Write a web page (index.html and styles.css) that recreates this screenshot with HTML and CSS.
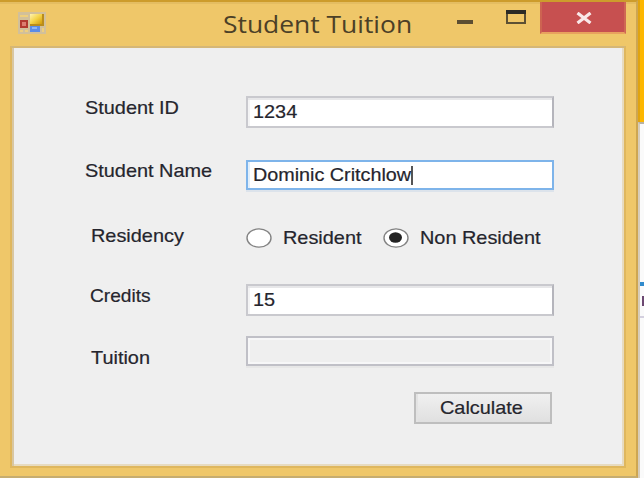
FILE: index.html
```html
<!DOCTYPE html>
<html lang="en">
<head>
<meta charset="utf-8">
<title>Student Tuition</title>
<link rel="stylesheet" href="styles.css">
</head>
<body>
<div class="desktop">
  <main class="window">
    <header class="titlebar">
      <svg class="app-icon" width="28" height="22" viewBox="0 0 28 22">
        <defs>
          <linearGradient id="gold" x1="0" y1="0" x2="1" y2="1"><stop offset="0" stop-color="#fff3b0"/><stop offset=".5" stop-color="#f4d348"/><stop offset="1" stop-color="#d19a08"/></linearGradient>
        </defs>
        <rect width="28" height="22" fill="#d2c09a"/>
        <path d="M2 3h8v2H2zM2 18h3v2H2zM7 18h3v2H7zM24 16h2v4h-2z" fill="#efcf7c"/>
        <rect x="2" y="8" width="8" height="8" fill="#b23a30"/>
        <rect x="4" y="10" width="4" height="4" fill="#dc7d70"/>
        <rect x="12" y="2" width="14" height="12" fill="#b98c1c"/>
        <rect x="12" y="2" width="12" height="10" fill="url(#gold)"/>
        <rect x="12" y="14" width="10" height="6" fill="#5b8ce6"/>
        <rect x="14" y="15" width="5" height="2" fill="#8db4f4"/>
      </svg>
      <h1 class="title"><span>Student Tuition</span></h1>
      <div class="controls">
        <svg class="minimize" width="18" height="24" viewBox="0 0 18 24"><path d="M1 18h16v4H1z" fill="#5c4e32"/></svg>
        <svg class="maximize" width="20" height="24" viewBox="0 0 20 24"><path d="M1 10v11h18V10" fill="none" stroke="#5c5034" stroke-width="2"/><path d="M0 8h20v4H0z" fill="#2b2b26"/></svg>
        <div class="close"><svg width="16" height="12" viewBox="0 0 16 12"><path d="M1.500 1L14.500 11M14.500 1L1.500 11" stroke="#f9e9e9" stroke-width="3.200"/></svg></div>
      </div>
    </header>
    <form class="client">
      <div class="row id"><label class="text">Student ID</label><div class="field"><span class="text">1234</span></div></div>
      <div class="row name"><label class="text">Student Name</label><div class="field focused"><span class="text">Dominic Critchlow</span><i class="caret"></i></div></div>
      <div class="row residency"><label class="text">Residency</label>
        <div class="options">
          <svg width="26" height="20" viewBox="0 0 26 20"><ellipse cx="13" cy="10" rx="12" ry="9.100" fill="#fff" stroke="#828282" stroke-width="1.400"/></svg><span class="text resident">Resident</span>
          <svg width="26" height="20" viewBox="0 0 26 20"><ellipse cx="13" cy="10" rx="12" ry="9.100" fill="#fff" stroke="#828282" stroke-width="1.400"/><ellipse cx="12.500" cy="9.500" rx="6.500" ry="5.200" fill="#222"/></svg><span class="text">Non Resident</span>
        </div>
      </div>
      <div class="row credits"><label class="text">Credits</label><div class="field"><span class="text">15</span></div></div>
      <div class="row tuition"><label class="text">Tuition</label><div class="field readonly"></div></div>
      <div class="button"><span class="text">Calculate</span></div>
    </form>
  </main>
  <aside class="behind">
    <div class="behind-gold"></div>
    <div class="behind-page"><div class="behind-blue"></div><div class="behind-text"></div><div class="behind-line"></div></div>
  </aside>
</div>
</body>
</html>
```
FILE: styles.css
```css
* { box-sizing: border-box; }
body { margin: 0; overflow: hidden; }
.desktop { display: flex; width: 644px; height: 478px; }
.window {
  width: 638px;
  height: 478px;
  background: #efc769;
  border-top: 2px solid #cd9c2c;
  border-right: 2px solid #cda652;
  border-bottom: 2px solid #c6ad70;
  box-shadow: inset 0 2px #e4bd62;
}
.titlebar { display: flex; height: 44px; }
.app-icon { margin: 10px 0 0 18px; flex: none; }
.title {
  margin: 5px 0 0 177px;
  width: 200px;
  font: 400 23px/34px "Open Sans", sans-serif;
  color: #4b4027;
  white-space: nowrap;
}
.title span { display: inline-block; transform: scaleX(1.148); transform-origin: 0 50%; }
.controls { display: flex; margin-left: 33px; flex: none; }
.minimize { margin-right: 32px; }
.maximize { margin-right: 14px; }
.close {
  display: flex;
  align-items: center;
  justify-content: center;
  width: 86px;
  height: 32px;
  padding-top: 2px;
  padding-left: 2px;
  background: #c75050;
  border-left: 2px solid #cd6351;
  border-right: 2px solid #cf6854;
  border-bottom: 2px solid #e8a25e;
}
.client {
  display: flex;
  flex-direction: column;
  width: 616px;
  height: 422px;
  margin-left: 10px;
  padding: 48px 0 0 72px;
  background: #efefef;
  border: 2px solid #dfb75e;
  border-top-color: #d5b777;
  box-shadow: inset 2px 0 #d9c7a1, inset -2px -2px #e7dbc0;
  font: 18.5px/22px "Liberation Sans", sans-serif;
  color: #25252d;
}
.row { display: flex; align-items: flex-start; }
.row > label { flex: none; }
.text {
  display: inline-block;
  transform: scaleX(1.075);
  transform-origin: 0 50%;
  white-space: nowrap;
  -webkit-text-stroke: 0.2px #25252d;
}
.row > label.text { width: 149px; margin-left: 1px; margin-right: 12px; }
.field {
  display: flex;
  align-items: center;
  width: 308px;
  height: 32px;
  padding-left: 5px;
  background: #fff;
  border: 2px solid #c9c9ce;
  border-right-color: #b5b5bc;
  box-shadow: inset 0 2px #e7e7e9, inset 2px 0 #f4f4f5;
}
.id { height: 64px; }
.id label { margin-top: 1px; }
.name { height: 68px; }
.focused { height: 30px; border-color: #7eb4ea; box-shadow: inset 2px 0 #e2effb, 0 2px #dce3eb; }
.focused .text { transform: scaleX(1.068); }
.caret { width: 2px; height: 19px; margin-left: 10px; background: #555; }
.residency { height: 56px; padding-left: 6px; }
.residency > label.text { margin-top: -3px; margin-right: 6px; }
.options { display: flex; align-items: center; height: 20px; }
.options .text { margin-left: 11px; }
.options .resident { width: 75px; margin-right: 25px; }
.credits { height: 52px; padding-left: 5px; }
.credits label.text { margin-top: 1px; margin-right: 7px; transform: scaleX(1.035); }
.tuition { height: 56px; padding-left: 7px; }
.tuition label.text { margin-top: 11px; margin-right: 5px; margin-left: 0; width: 150px; }
.readonly { height: 30px; background: #efefef; border-color: #c0c0c7; box-shadow: inset 0 0 0 2px #f7f7f8, 0 2px #e7e7e7; }
.button {
  display: flex;
  align-items: center;
  width: 138px;
  height: 32px;
  margin-left: 330px;
  padding-left: 24px;
  background: linear-gradient(#f0f0f0, #e0e0e0);
  border: 2px solid #bebebe;
  box-shadow: inset 2px 0 #e3e3e3;
}
.behind { width: 6px; }
.behind-gold { height: 122px; background: #fdb700; border-left: 2px solid #e0a410; }
.behind-page {
  height: 356px;
  padding-top: 158px;
  background: #fafafa;
  border-top: 2px solid #b8b2a5;
  border-left: 2px solid #d6ccba;
}
.behind-blue { height: 4px; background: #318bcd; }
.behind-text { width: 2px; height: 10px; margin: 10px 0 0 2px; background: #6c4872; }
.behind-line { height: 2px; margin-top: 10px; background: #d4d0df; }
```
